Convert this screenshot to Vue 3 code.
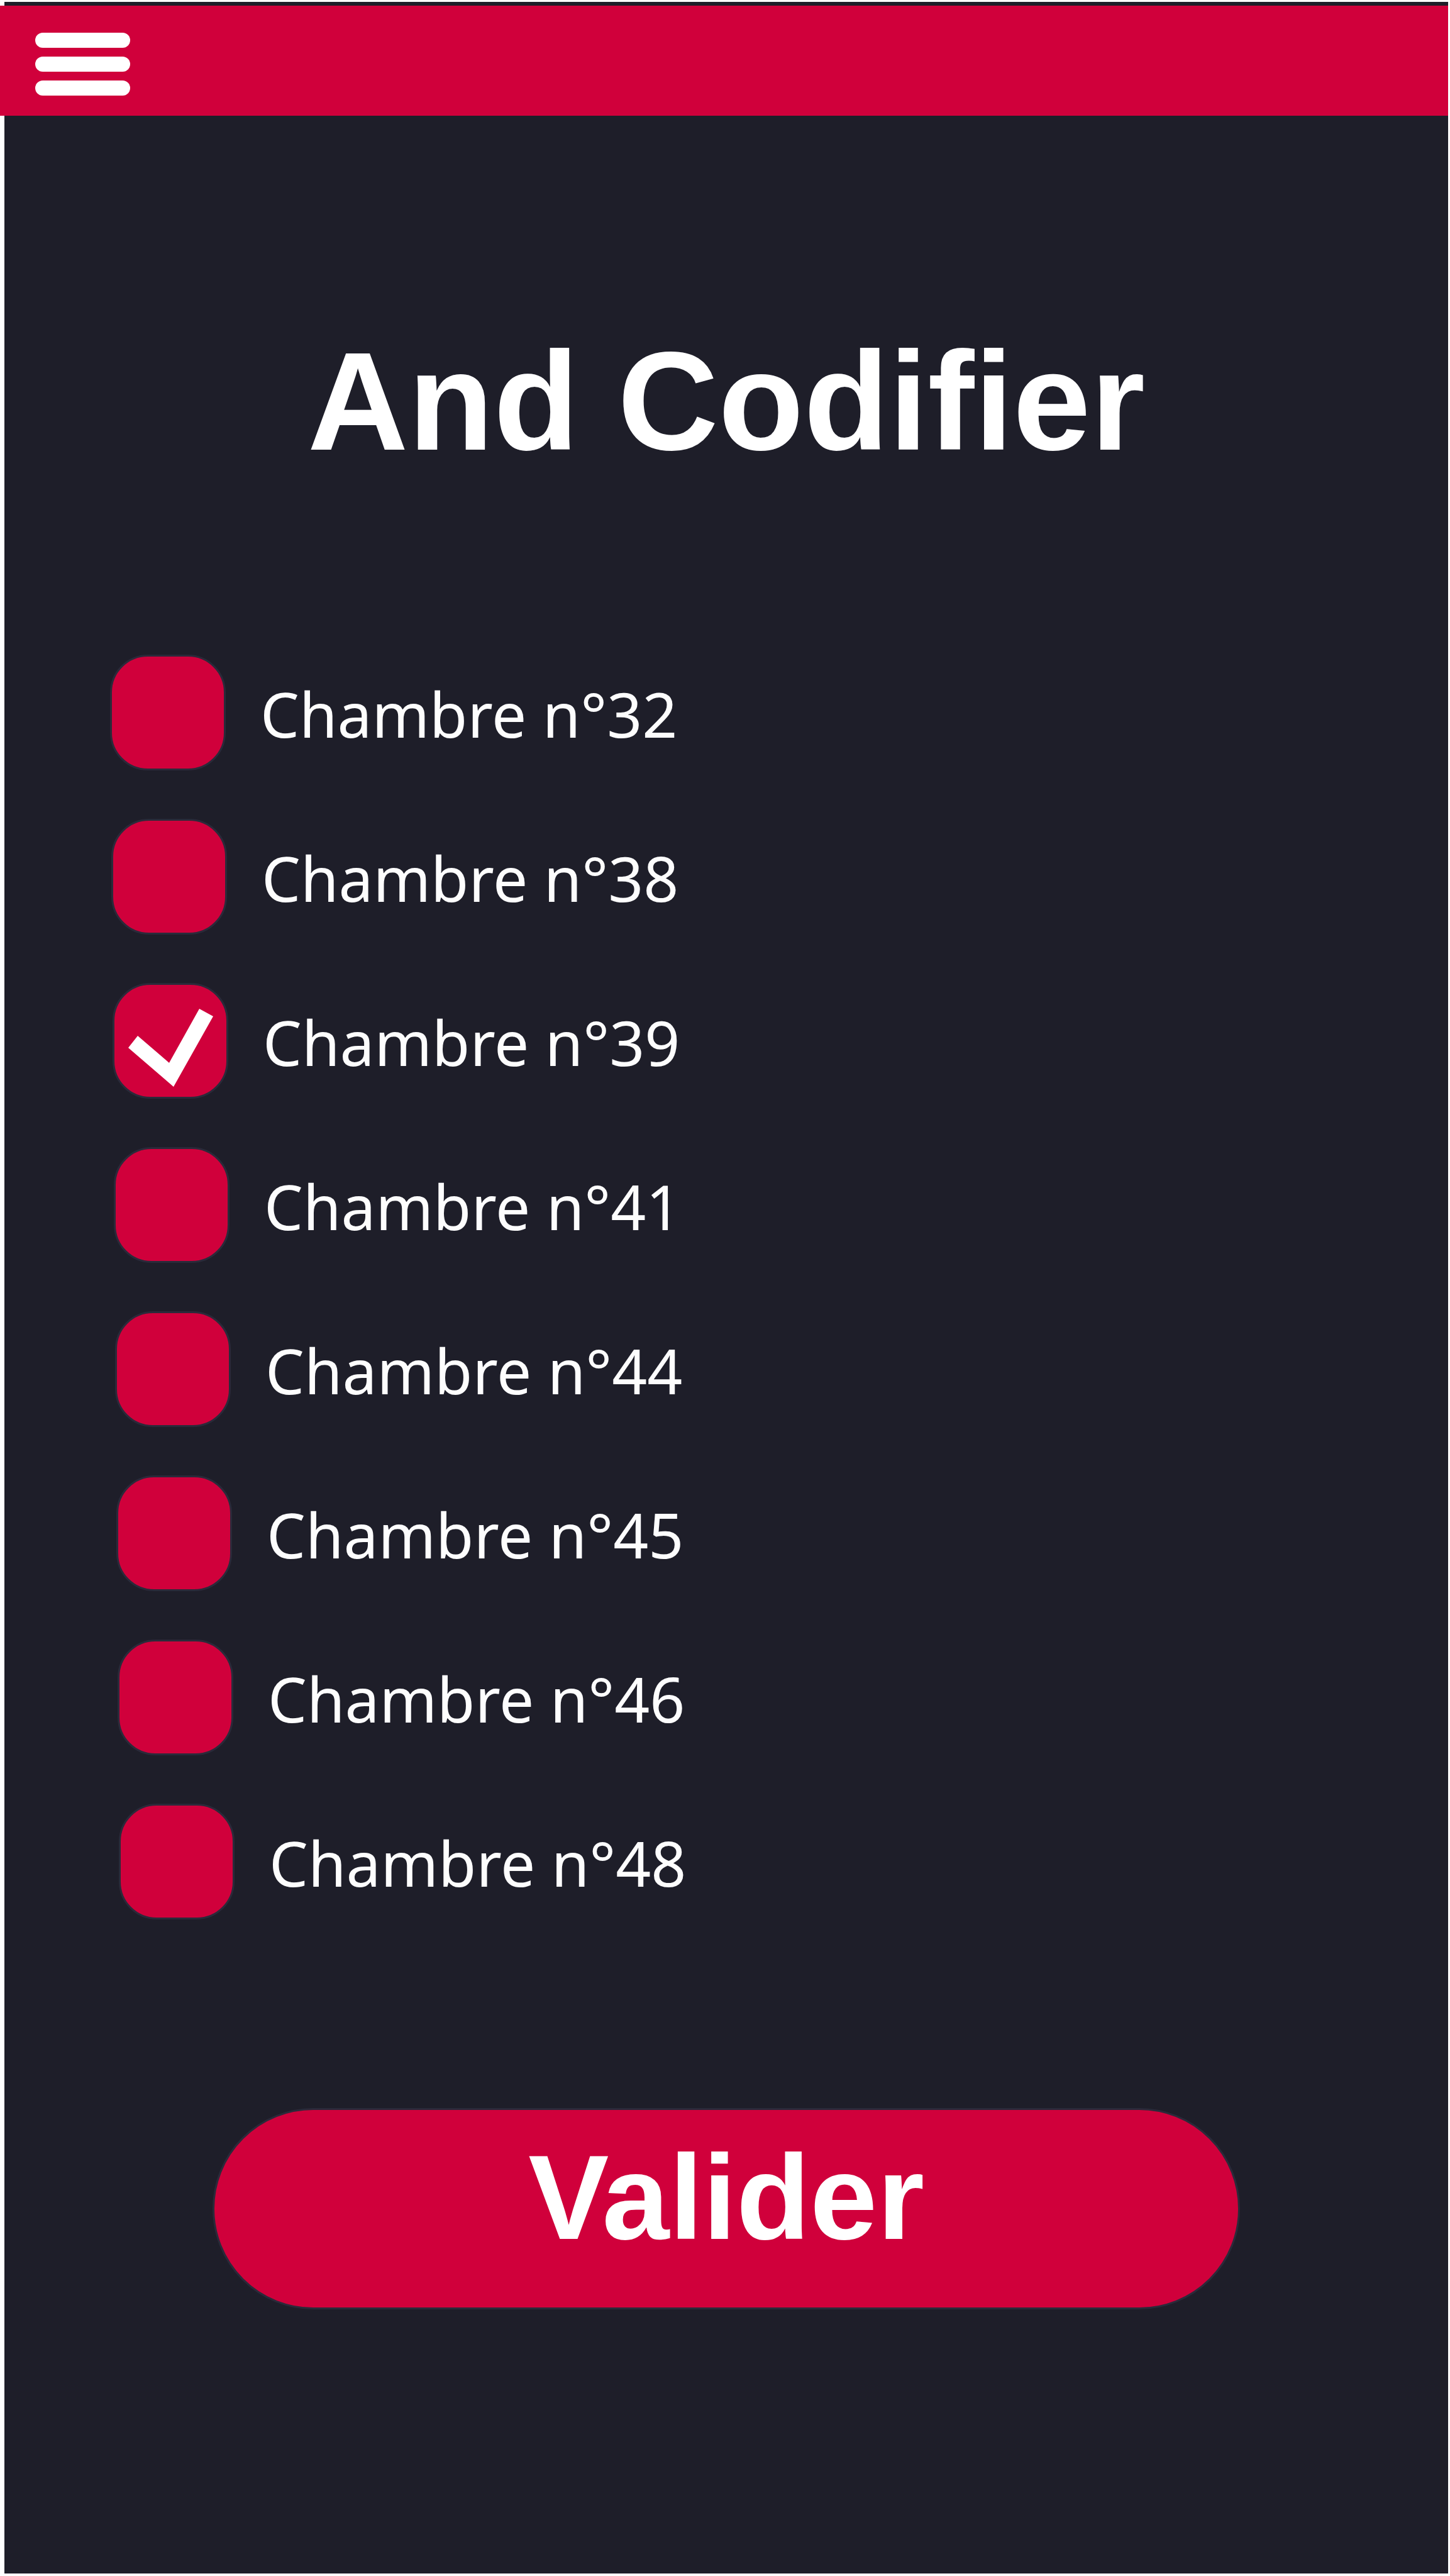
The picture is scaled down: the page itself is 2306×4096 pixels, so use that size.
<script setup>
import { ref } from 'vue'

const rooms = ref([
  { number: 32, checked: false },
  { number: 38, checked: false },
  { number: 39, checked: true },
  { number: 41, checked: false },
  { number: 44, checked: false },
  { number: 45, checked: false },
  { number: 46, checked: false },
  { number: 48, checked: false }
])
</script>

<template>
  <div class="page">
    <header class="bar">
      <button class="menu" type="button" aria-label="Menu">
        <span class="line"></span>
        <span class="line"></span>
        <span class="line"></span>
      </button>
    </header>
    <main class="content">
      <h1 class="title">And Codifier</h1>
      <form class="form" @submit.prevent>
        <ul class="rooms">
          <li
            v-for="(room, index) in rooms"
            :key="room.number"
            class="room"
            :style="{ paddingLeft: index * 2 + 'px' }"
          >
            <label class="option">
              <span class="tick">
                <input v-model="room.checked" class="box" type="checkbox" />
                <svg v-if="room.checked" class="mark" viewBox="0 0 184 184" aria-hidden="true">
                  <path d="M25 103L40 84L90 127L138 41L160 53L97 165Z" fill="#fff" />
                </svg>
              </span>
              <span class="name">Chambre n°{{ room.number }}</span>
            </label>
          </li>
        </ul>
        <button class="submit" type="submit">Valider</button>
      </form>
    </main>
  </div>
</template>

<style>
body {
  margin: 0;
  background: #fff;
}
</style>

<style scoped>
.page {
  box-sizing: border-box;
  min-height: 100vh;
  padding: 3px 3px 4px 0;
  display: flex;
  flex-direction: column;
}

.bar {
  position: relative;
  box-sizing: border-box;
  height: 181px;
  padding: 49px 56px 32px;
  background: #d0003b;
}

/* dark edge of the screen showing above the bar */
.bar::before {
  content: "";
  position: absolute;
  inset: 0 0 auto 0;
  height: 6px;
  border-left: 7px solid #fff;
  background: #1e1e29;
}

.menu {
  display: flex;
  flex-direction: column;
  gap: 14px;
  width: 151px;
  padding: 0;
  border: 0;
  background: none;
}

.line {
  width: 100%;
  height: 24px;
  border-radius: 12px;
  background: #fff;
}

.content {
  flex: 1;
  margin-left: 7px;
  background: #1e1e29;
}

.title {
  margin: 0;
  padding-top: 328px;
  font: bold 222px/252px "Liberation Sans", Arial, sans-serif;
  text-align: center;
  color: #fff;
}

.form {
  display: flex;
  flex-direction: column;
}

.rooms {
  display: flex;
  flex-direction: column;
  gap: 77px;
  margin: 277px 0 0;
  padding: 0 0 0 168px;
  list-style: none;
}

.room {
  display: flex;
}

.option {
  display: flex;
  align-items: center;
  gap: 55px;
}

.tick {
  position: relative;
  display: block;
  width: 184px;
  height: 184px;
}

.box {
  appearance: none;
  box-sizing: border-box;
  display: block;
  width: 100%;
  height: 100%;
  margin: 0;
  border: 3px solid #2b2a3a;
  border-radius: 60px;
  background: #d0003b;
}

.mark {
  position: absolute;
  inset: 0;
  pointer-events: none;
}

.name {
  padding-top: 4px;
  font: 98px/132px "Noto Sans", "Open Sans", sans-serif;
  color: #fdfdfd;
}

.submit {
  box-sizing: border-box;
  height: 320px;
  margin: 300px 331px 0;
  padding: 0 0 36px;
  border: 3px solid #2b2a3a;
  border-radius: 160px;
  background: #d0003b;
  font: bold 192px/220px "Liberation Sans", Arial, sans-serif;
  color: #fff;
}
</style>
